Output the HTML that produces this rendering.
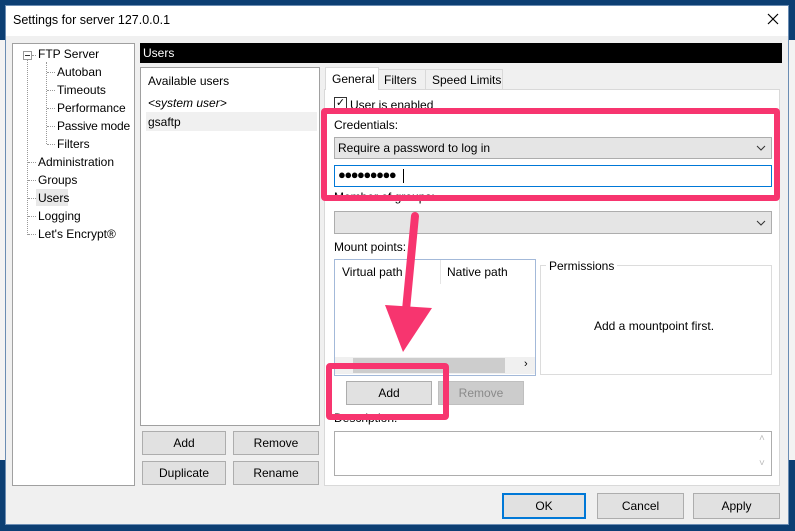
<!DOCTYPE html>
<html><head><style>
*{margin:0;padding:0;box-sizing:border-box}
body{width:795px;height:531px;overflow:hidden;background:#0c3f73;font-family:"Liberation Sans",sans-serif;font-size:12px;color:#000;position:relative}
.a{position:absolute}
.btn{position:absolute;background:#e1e1e1;border:1px solid #adadad;text-align:center;line-height:22px}
.t{position:absolute;white-space:nowrap}
.sel{position:absolute;background:#e5e5e5;border:1px solid #adadad}
.pink{position:absolute;border:6px solid #f7356f;border-radius:4px}
.h{position:absolute;width:8px;border-top:1px dotted #999}
</style></head><body>
<div class="a" style="left:0;top:40px;width:5px;height:420px;background:#f3f3f3"></div>
<div class="a" style="left:789px;top:40px;width:6px;height:420px;background:#f3f3f3"></div>
<div class="a" style="left:5px;top:5px;width:784px;height:520px;background:#f0f0f0;border:1px solid #6b8db3"></div>
<div class="a" style="left:6px;top:6px;width:782px;height:30px;background:#fff"></div>
<div class="t" style="left:13px;top:13px;font-size:12.5px">Settings for server 127.0.0.1</div>
<svg class="a" style="left:767px;top:13px" width="12" height="12"><path d="M1 1L11 11M11 1L1 11" stroke="#000" stroke-width="1.2"/></svg>

<div class="a" style="left:12px;top:43px;width:123px;height:443px;background:#fff;border:1px solid #a0a0a0"></div>
<div class="a" style="left:23px;top:51px;width:9px;height:9px;border:1px solid #999;background:#fff"></div>
<div class="a" style="left:25px;top:55px;width:5px;height:1px;background:#333"></div>
<div class="a" style="left:27px;top:60px;height:175px;border-left:1px dotted #999"></div>
<div class="a" style="left:46px;top:62px;height:82px;border-left:1px dotted #999"></div>
<div class="h" style="left:32px;top:55px;width:4px"></div>
<div class="h" style="left:47px;top:72px"></div>
<div class="h" style="left:47px;top:90px"></div>
<div class="h" style="left:47px;top:108px"></div>
<div class="h" style="left:47px;top:126px"></div>
<div class="h" style="left:47px;top:144px"></div>
<div class="h" style="left:28px;top:162px"></div>
<div class="h" style="left:28px;top:180px"></div>
<div class="h" style="left:28px;top:198px"></div>
<div class="h" style="left:28px;top:216px"></div>
<div class="h" style="left:28px;top:234px"></div>
<div class="t" style="left:38px;top:47px">FTP Server</div>
<div class="t" style="left:57px;top:65px">Autoban</div>
<div class="t" style="left:57px;top:83px">Timeouts</div>
<div class="t" style="left:57px;top:101px">Performance</div>
<div class="t" style="left:57px;top:119px;letter-spacing:-0.2px">Passive mode</div>
<div class="t" style="left:57px;top:137px">Filters</div>
<div class="t" style="left:38px;top:155px">Administration</div>
<div class="t" style="left:38px;top:173px">Groups</div>
<div class="a" style="left:36px;top:189px;width:32px;height:17px;background:#e8e8e8"></div>
<div class="t" style="left:38px;top:191px">Users</div>
<div class="t" style="left:38px;top:209px">Logging</div>
<div class="t" style="left:38px;top:227px">Let's Encrypt®</div>

<div class="a" style="left:140px;top:43px;width:642px;height:20px;background:#000"></div>
<div class="t" style="left:143px;top:46px;color:#fff">Users</div>

<div class="a" style="left:140px;top:67px;width:180px;height:359px;background:#fff;border:1px solid #a0a0a0"></div>
<div class="t" style="left:148px;top:74px">Available users</div>
<div class="t" style="left:148px;top:96px;font-style:italic">&lt;system user&gt;</div>
<div class="a" style="left:146px;top:112px;width:171px;height:19px;background:#f0f0f0"></div>
<div class="t" style="left:148px;top:115px">gsaftp</div>
<div class="btn" style="left:142px;top:431px;width:84px;height:24px">Add</div>
<div class="btn" style="left:233px;top:431px;width:86px;height:24px">Remove</div>
<div class="btn" style="left:142px;top:461px;width:84px;height:24px">Duplicate</div>
<div class="btn" style="left:233px;top:461px;width:86px;height:24px">Rename</div>

<div class="a" style="left:324px;top:89px;width:456px;height:397px;background:#fff;border:1px solid #d9d9d9"></div>
<div class="a" style="left:378px;top:69px;width:48px;height:21px;background:#f0f0f0;border:1px solid #d9d9d9"></div>
<div class="a" style="left:425px;top:69px;width:78px;height:21px;background:#f0f0f0;border:1px solid #d9d9d9"></div>
<div class="a" style="left:325px;top:67px;width:54px;height:23px;background:#fff;border:1px solid #d9d9d9;border-bottom:none"></div>
<div class="t" style="left:332px;top:72px">General</div>
<div class="t" style="left:384px;top:73px">Filters</div>
<div class="t" style="left:432px;top:73px">Speed Limits</div>

<div class="a" style="left:334px;top:97px;width:13px;height:13px;border:1px solid #333;background:#fff;font-size:11px;line-height:11px;text-align:center">✓</div>
<div class="t" style="left:350px;top:98px">User is enabled</div>
<div class="t" style="left:334px;top:118px">Credentials:</div>
<div class="sel" style="left:334px;top:137px;width:438px;height:22px"></div>
<div class="t" style="left:338px;top:141px">Require a password to log in</div>
<svg class="a" style="left:756px;top:144px" width="10" height="8"><path d="M1 2L5 6L9 2" stroke="#333" fill="none"/></svg>
<div class="a" style="left:334px;top:165px;width:438px;height:22px;border:1px solid #0078d7;background:#fff"></div>
<div class="t" style="left:338px;top:167px;font-size:13px;letter-spacing:-1.5px">●●●●●●●●●</div>
<div class="a" style="left:403px;top:169px;width:1px;height:14px;background:#000"></div>
<div class="t" style="left:334px;top:190px">Member of groups:</div>
<div class="sel" style="left:334px;top:211px;width:438px;height:23px"></div>
<svg class="a" style="left:756px;top:219px" width="10" height="8"><path d="M1 2L5 6L9 2" stroke="#333" fill="none"/></svg>
<div class="t" style="left:334px;top:240px">Mount points:</div>
<div class="a" style="left:334px;top:259px;width:202px;height:117px;border:1px solid #a3b9d9;background:#fff"></div>
<div class="t" style="left:342px;top:265px">Virtual path</div>
<div class="a" style="left:440px;top:260px;width:1px;height:24px;background:#e5e5e5"></div>
<div class="t" style="left:447px;top:265px">Native path</div>
<div class="a" style="left:335px;top:357px;width:200px;height:17px;background:#f0f0f0"></div>
<div class="a" style="left:353px;top:358px;width:152px;height:15px;background:#cdcdcd"></div>
<div class="t" style="left:524px;top:358px;font-size:11px">›</div>
<div class="a" style="left:540px;top:265px;width:232px;height:110px;border:1px solid #dcdcdc"></div>
<div class="t" style="left:546px;top:259px;background:#fff;padding:0 3px">Permissions</div>
<div class="t" style="left:594px;top:319px">Add a mountpoint first.</div>
<div class="btn" style="left:346px;top:381px;width:86px;height:24px">Add</div>
<div class="btn" style="left:438px;top:381px;width:86px;height:24px;background:#ccc;border-color:#bfbfbf;color:#8a8a8a">Remove</div>
<div class="t" style="left:334px;top:411px">Description:</div>
<div class="a" style="left:334px;top:431px;width:438px;height:45px;border:1px solid #adadad;background:#fff"></div>
<div class="t" style="left:759px;top:433px;color:#bbb;font-size:10px">˄</div>
<div class="t" style="left:759px;top:458px;color:#bbb;font-size:10px">˅</div>

<div class="pink" style="left:321px;top:108px;width:459px;height:93px"></div>
<div class="pink" style="left:326px;top:363px;width:123px;height:57px"></div>
<svg class="a" style="left:380px;top:210px" width="60" height="150"><path d="M35 6 L26 100" stroke="#f7356f" stroke-width="8" stroke-linecap="round" fill="none"/><path d="M5 95 L52 98 L23 142 Z" fill="#f7356f"/></svg>

<div class="btn" style="left:502px;top:493px;width:84px;height:26px;border:2px solid #0078d7;line-height:22px">OK</div>
<div class="btn" style="left:597px;top:493px;width:87px;height:26px;line-height:24px">Cancel</div>
<div class="btn" style="left:693px;top:493px;width:87px;height:26px;line-height:24px">Apply</div>
</body></html>
